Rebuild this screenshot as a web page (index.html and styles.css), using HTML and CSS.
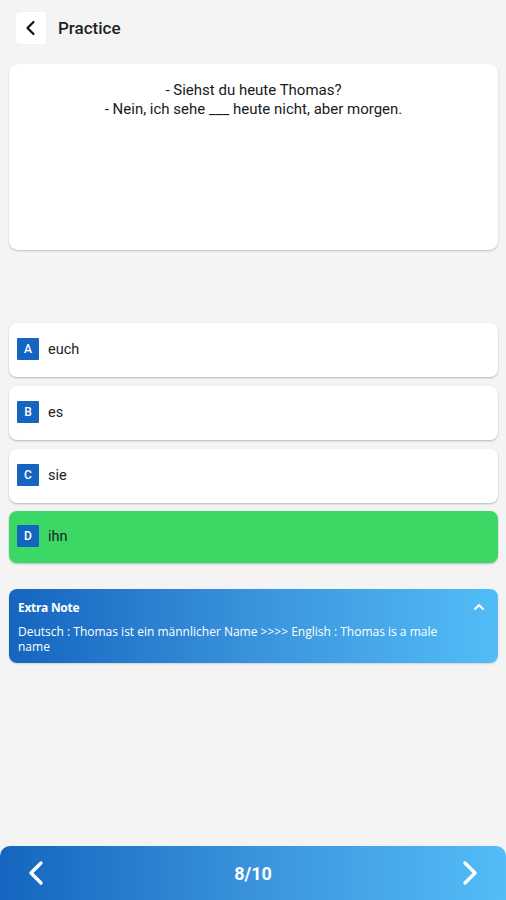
FILE: index.html
```html
<!DOCTYPE html>
<html>
<head>
<meta charset="utf-8">
<link rel="stylesheet" href="styles.css">
</head>
<body>
<div class="app">
  <header class="header">
    <div class="back">
      <svg width="14" height="16" viewBox="0 0 14 16"><path d="M9.5 2 L3.5 8 L9.5 14" fill="none" stroke="#111" stroke-width="2.2" stroke-linecap="round" stroke-linejoin="round"/></svg>
    </div>
    <div class="title">Practice</div>
  </header>

  <section class="question">
    <p>- Siehst du heute Thomas?<br>- Nein, ich sehe ___ heute nicht, aber morgen.</p>
  </section>

  <section class="options">
    <div class="option"><span class="badge">A</span><span class="label">euch</span></div>
    <div class="option"><span class="badge">B</span><span class="label">es</span></div>
    <div class="option"><span class="badge">C</span><span class="label">sie</span></div>
    <div class="option correct"><span class="badge">D</span><span class="label">ihn</span></div>
  </section>

  <section class="note">
    <div class="note-head">
      <span class="note-title">Extra Note</span>
      <svg width="12" height="8" viewBox="0 0 12 8"><path d="M2 6 L6 2 L10 6" fill="none" stroke="#fff" stroke-width="2" stroke-linecap="round" stroke-linejoin="round"/></svg>
    </div>
    <p class="note-body">Deutsch : Thomas ist ein männlicher Name &gt;&gt;&gt;&gt; English : Thomas is a male name</p>
  </section>

  <div class="spacer"></div>

  <footer class="pager">
    <svg width="20" height="26" viewBox="0 0 20 26"><path d="M15 3 L5 13 L15 23" fill="none" stroke="#fff" stroke-width="3.4" stroke-linecap="round" stroke-linejoin="round"/></svg>
    <span class="count">8/10</span>
    <svg width="20" height="26" viewBox="0 0 20 26"><path d="M5 3 L15 13 L5 23" fill="none" stroke="#fff" stroke-width="3.4" stroke-linecap="round" stroke-linejoin="round"/></svg>
  </footer>
</div>
</body>
</html>
```
FILE: styles.css
```css
* { box-sizing: border-box; }
html, body { margin: 0; padding: 0; }
body {
  background: #f4f4f4;
  font-family: Roboto, "Liberation Sans", sans-serif;
  color: #1d1d1d;
}
.app {
  height: 900px;
  display: flex;
  flex-direction: column;
}
.header {
  height: 56px;
  display: flex;
  align-items: center;
  padding: 0 0 0 16px;
}
.back {
  width: 30px;
  height: 32px;
  background: #fff;
  border-radius: 4px;
  display: flex;
  align-items: center;
  justify-content: center;
  box-shadow: 0 0 2px rgba(0,0,0,0.05);
}
.title {
  margin-left: 12px;
  font-size: 17px;
  font-weight: 500;
  color: #222;
}
.question {
  margin: 8px 8px 0 9px;
  height: 186px;
  background: #fff;
  border-radius: 9px;
  box-shadow: 0 1px 2px rgba(0,0,0,0.22);
  padding-top: 17px;
}
.question p {
  margin: 0;
  text-align: center;
  font-size: 15px;
  line-height: 19px;
  color: #1a1a1a;
}
.options {
  margin: 73px 8px 0 9px;
  display: flex;
  flex-direction: column;
  gap: 9px;
}
.option {
  height: 54px;
  background: #fff;
  border-radius: 8px;
  box-shadow: 0 1px 2px rgba(0,0,0,0.25);
  display: flex;
  align-items: center;
  padding-left: 8px;
  gap: 9px;
}
.option.correct { background: #3bd866; height: 52px; margin-top: -1px; }
.badge {
  width: 22px;
  height: 22px;
  background: #1565c0;
  color: #fff;
  font-size: 12px;
  font-weight: 500;
  display: flex;
  align-items: center;
  justify-content: center;
  border-radius: 1px;
  margin-top: -3px;
}
.label {
  font-size: 14.5px;
  color: #222;
  margin-top: -2px;
}
.note {
  margin: 26px 8px 0 9px;
  height: 74px;
  border-radius: 8px;
  background: linear-gradient(90deg, #1565c0 0%, #3a93dc 50%, #52bdf7 100%);
  padding: 10px 12px 0 9px;
  color: #fff;
  box-shadow: 0 1px 2px rgba(0,0,0,0.15);
  font-family: "Open Sans", Roboto, sans-serif;
}
.note-head {
  display: flex;
  align-items: center;
  justify-content: space-between;
  height: 16px;
}
.note-head svg { margin-right: 1px; }
.note-title {
  font-size: 12px;
  font-weight: 700;
  letter-spacing: -0.3px;
}
.note-body {
  margin: 9px 0 0 0;
  font-size: 12px;
  line-height: 15px;
  padding-right: 20px;
}
.spacer { flex: 1; }
.pager {
  height: 54px;
  border-radius: 10px 10px 0 0;
  background: linear-gradient(90deg, #1565c0 0%, #3a93dc 50%, #52bdf7 100%);
  display: flex;
  align-items: center;
  justify-content: space-between;
  padding: 0 26px 0 26px;
}
.count {
  color: #fff;
  font-size: 18px;
  font-weight: 700;
}
```
